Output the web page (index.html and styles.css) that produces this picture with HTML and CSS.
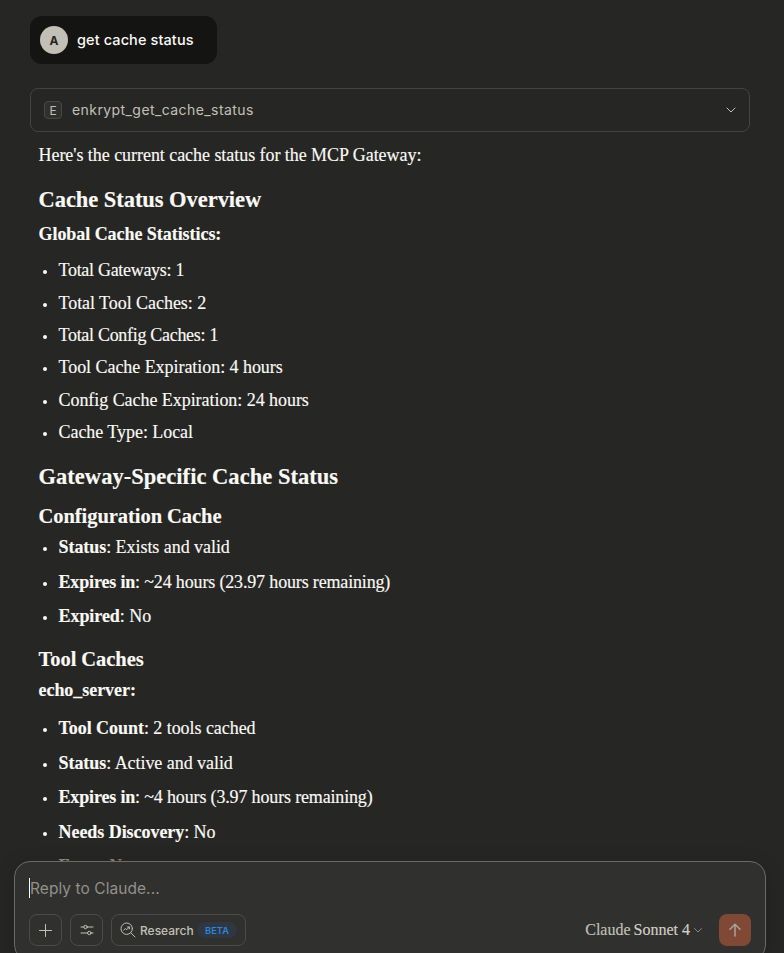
FILE: index.html
```html
<!DOCTYPE html>
<html lang="en">
<head>
<meta charset="utf-8">
<title>Cache status</title>
<link rel="stylesheet" href="styles.css">
</head>
<body>
<div class="app">
  <main class="chat">
    <div class="user-message"><span class="avatar">A</span><span class="user-text">get cache status</span></div>
    <div class="tool-call">
      <span class="tool-badge">E</span><span class="tool-name">enkrypt_get_cache_status</span>
      <svg class="chevron" width="10" height="6" viewBox="0 0 10 6"><path d="M1 1l4 4 4-4"/></svg>
    </div>
    <article class="reply">
      <p class="intro">Here's the current cache status for the MCP Gateway:</p>
      <h2 class="overview">Cache Status Overview</h2>
      <h4>Global Cache Statistics:</h4>
      <ul class="plain">
        <li class="tight">Total Gateways: 1</li>
        <li>Total Tool Caches: 2</li>
        <li class="tight">Total Config Caches: 1</li>
        <li>Tool Cache Expiration: 4 hours</li>
        <li>Config Cache Expiration: 24 hours</li>
        <li>Cache Type: Local</li>
      </ul>
      <h2 class="specific">Gateway-Specific Cache Status</h2>
      <h3 class="config">Configuration Cache</h3>
      <ul class="detail">
        <li><b>Status</b>: Exists and valid</li>
        <li class="remaining"><b>Expires in</b>: ~24 hours (23.97 hours remaining)</li>
        <li><b>Expired</b>: No</li>
      </ul>
      <h3 class="tools">Tool Caches</h3>
      <h4 class="server">echo_server:</h4>
      <ul class="detail server-detail">
        <li><b>Tool Count</b>: 2 tools cached</li>
        <li><b>Status</b>: Active and valid</li>
        <li class="remaining"><b>Expires in</b>: ~4 hours (3.97 hours remaining)</li>
        <li><b>Needs Discovery</b>: No</li>
        <li class="faded"><b>Error</b>: None</li>
      </ul>
    </article>
  </main>
  <footer class="composer">
    <div class="input"><span class="caret"></span><span class="placeholder">Reply to Claude...</span></div>
    <div class="toolbar">
      <button class="square" aria-label="Add"><svg width="13" height="13" viewBox="0 0 13 13"><path d="M6.500.5v12M.5 6.500h12"/></svg></button>
      <button class="square" aria-label="Tools"><svg width="14" height="12" viewBox="0 0 14 12"><path d="M1 3h2.800M7.200 3H13M1 9h6.600M11 9h2"/><circle cx="5.500" cy="3" r="1.700"/><circle cx="9.300" cy="9" r="1.700"/></svg></button>
      <button class="research">
        <svg width="16" height="16" viewBox="0 0 16 16"><circle cx="6.700" cy="6.700" r="5.700"/><path d="M10.900 10.900L15 15M3.700 8.200l1.600-1.700 1.500 1.200 2.500-2.700M7.500 5h1.900v1.900"/></svg>
        <span class="research-label">Research</span><span class="beta">BETA</span>
      </button>
      <button class="model"><span class="brand">Claude</span><span class="version">Sonnet 4</span><svg width="8" height="5" viewBox="0 0 8 5"><path d="M.5.5L4 4 7.500.5"/></svg></button>
      <button class="send" aria-label="Send"><svg width="12" height="14" viewBox="0 0 12 14"><path d="M6 13V1.500M1 6.200l5-5 5 5"/></svg></button>
    </div>
  </footer>
</div>
</body>
</html>
```
FILE: styles.css
```css
* { box-sizing: border-box; }
body { margin: 0; background: #262624; color: #faf9f5; font-family: "Liberation Serif", serif; }
button { font: inherit; color: inherit; background: none; padding: 0; margin: 0; }
svg { display: block; fill: none; stroke: currentColor; stroke-width: 1; stroke-linecap: round; stroke-linejoin: round; flex: none; }
.app { height: 953px; display: flex; flex-direction: column; overflow: hidden; }
.chat { height: 861px; flex: none; overflow: hidden; padding: 16px 34px 0 30px; }

.user-message { width: 187px; height: 48px; border-radius: 12px; background: #141413; display: flex; align-items: center; padding-left: 10px; gap: 9px; font-family: Inter, sans-serif; }
.avatar { width: 28px; height: 28px; border-radius: 50%; background: #c2c0b6; color: #262624; font-size: 12px; font-weight: 700; display: flex; align-items: center; justify-content: center; }
.user-text { font-size: 14.500px; font-weight: 500; letter-spacing: .1px; white-space: nowrap; padding-bottom: 1px; }

.tool-call { height: 44px; margin-top: 24px; border: 1px solid #434340; border-radius: 8px; display: flex; align-items: center; padding: 0 13px; color: #c2c0b6; font-family: Inter, sans-serif; }
.tool-badge { width: 18px; height: 18px; border: 1px solid #484845; border-radius: 4px; background: #30302e; font-size: 12px; display: flex; align-items: center; justify-content: center; }
.tool-name { font-size: 14px; letter-spacing: .42px; margin-left: 10px; padding-bottom: 2px; }
.chevron { margin-left: auto; }

.reply { padding-left: 8.500px; white-space: nowrap; font-size: 18px; letter-spacing: -.05px; -webkit-text-stroke: .15px currentColor; }
p, h2, h3, h4, ul { margin: 0; padding: 0; }
.intro { line-height: 24px; margin-top: 11px; }
h2 { font-size: 22.500px; line-height: 28px; }
h3 { font-size: 20.500px; line-height: 25px; }
h4 { font-size: 18px; line-height: 24px; }
.overview { margin-top: 19px; }
.overview + h4 { margin-top: 8px; }
ul { display: flex; flex-direction: column; list-style: none; }
li { line-height: 24px; display: block; }
li::before { content: ""; display: inline-block; width: 4px; height: 4px; border-radius: 50%; background: currentColor; margin: 0 12px 2px 4px; }
.tight { letter-spacing: -.3px; }
.remaining { letter-spacing: -.16px; }
.faded { color: #8a8984; letter-spacing: -.5px; }
.plain { gap: 8.400px; margin-top: 12.300px; }
.specific { margin-top: 18.700px; letter-spacing: .03px; }
.config { margin-top: 13px; }
.detail { gap: 10.500px; margin-top: 6.400px; }
.tools { margin-top: 18.600px; }
.server { margin-top: 6.500px; }
.server-detail { margin-top: 14px; }

.composer { flex: none; height: 100px; margin: 0 18px 0 14px; border: 1px solid #6b6a66; border-radius: 16px; background: #30302e; padding: 15px 14px 0; box-shadow: 0 4px 20px rgba(0, 0, 0, .15); font-family: Inter, sans-serif; }
.input { display: flex; align-items: center; height: 22px; font-size: 15.500px; letter-spacing: .06px; color: #91908a; }
.caret { width: 1px; height: 20px; background: #fff; }
.toolbar { display: flex; align-items: center; height: 32px; margin-top: 15px; color: #c2c0b6; }
.square { width: 33px; height: 32px; margin-right: 8px; border: 1px solid #4b4b48; border-radius: 8px; display: flex; align-items: center; justify-content: center; }
.research { width: 135px; height: 32px; border: 1px solid #4b4b48; border-radius: 8px; display: flex; align-items: center; padding-left: 8px; }
.research-label { width: 53px; font-size: 12px; font-weight: 500; margin-left: 4px; }
.beta { width: 40px; height: 16px; margin-left: 4px; border-radius: 8px; background: #2f3742; color: #2c84db; font-size: 9.300px; font-weight: 600; display: flex; align-items: center; justify-content: center; }
.model { margin-left: auto; border: 0; display: flex; align-items: center; font-family: "Liberation Serif", serif; font-size: 16px; white-space: nowrap; -webkit-text-stroke: .15px currentColor; }
.version { margin-left: 3px; color: #d2d0c8; }
.model svg { margin-left: 4px; opacity: .6; }
.send { width: 32px; height: 32px; margin-left: 17px; border: 0; border-radius: 8px; background: #804935; color: #aaa39a; display: flex; align-items: center; justify-content: center; }
.send svg { stroke-width: 1.500; }
```
